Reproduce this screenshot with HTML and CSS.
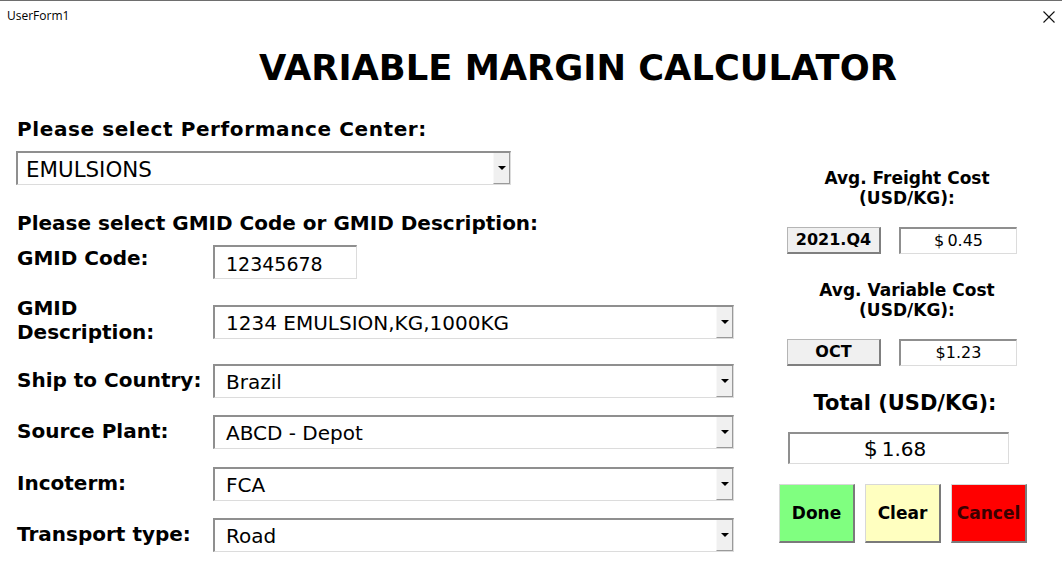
FILE: index.html
```html
<!DOCTYPE html>
<html>
<head>
<meta charset="utf-8">
<link rel="stylesheet" href="styles.css">
</head>
<body>
<div class="window">
  <div class="titlebar">
    <span class="caption">UserForm1</span>
    <svg class="close" width="12" height="12" viewBox="0 0 12 12"><path d="M0.5 0.5 L11.5 11.5 M11.5 0.5 L0.5 11.5" stroke="#111" stroke-width="1.1" fill="none"/></svg>
  </div>
  <h1 class="title">VARIABLE MARGIN CALCULATOR</h1>
  <div class="main">
    <div class="left">
      <div class="label head-label">Please select Performance Center:</div>
      <div class="combo combo-pc"><span class="value">EMULSIONS</span><span class="drop"><i></i></span></div>
      <div class="label sub-label">Please select GMID Code or GMID Description:</div>
      <div class="row row-code">
        <div class="label field-label">GMID Code:</div>
        <div class="textbox code-box">12345678</div>
      </div>
      <div class="row row-desc">
        <div class="label field-label two-line">GMID<br>Description:</div>
        <div class="combo"><span class="value">1234 EMULSION,KG,1000KG</span><span class="drop"><i></i></span></div>
      </div>
      <div class="row">
        <div class="label field-label">Ship to Country:</div>
        <div class="combo"><span class="value">Brazil</span><span class="drop"><i></i></span></div>
      </div>
      <div class="row row-tall">
        <div class="label field-label">Source Plant:</div>
        <div class="combo"><span class="value">ABCD - Depot</span><span class="drop"><i></i></span></div>
      </div>
      <div class="row">
        <div class="label field-label">Incoterm:</div>
        <div class="combo"><span class="value">FCA</span><span class="drop"><i></i></span></div>
      </div>
      <div class="row">
        <div class="label field-label">Transport type:</div>
        <div class="combo"><span class="value">Road</span><span class="drop"><i></i></span></div>
      </div>
    </div>
    <div class="right">
      <div class="cost-head freight-head">Avg. Freight Cost<br>(USD/KG):</div>
      <div class="pair">
        <div class="period">2021.Q4</div>
        <div class="money">$&#8201;0.45</div>
      </div>
      <div class="cost-head var-head">Avg. Variable Cost<br>(USD/KG):</div>
      <div class="pair">
        <div class="period">OCT</div>
        <div class="money">$1.23</div>
      </div>
      <div class="total-head">Total (USD/KG):</div>
      <div class="total-box"><span class="dollar">$</span>&#8201;1.68</div>
      <div class="buttons">
        <div class="btn btn-done">Done</div>
        <div class="btn btn-clear">Clear</div>
        <div class="btn btn-cancel">Cancel</div>
      </div>
    </div>
  </div>
</div>
</body>
</html>
```

FILE: styles.css
```css
* { box-sizing: border-box; }
html, body { margin: 0; padding: 0; background: #fff; }
body { font-family: "DejaVu Sans", Verdana, sans-serif; color: #000; }

.window {
  width: 1062px;
  height: 570px;
  border-top: 1px solid #6e6e6e;
  background: #fff;
  overflow: hidden;
}

.titlebar {
  height: 29px;
  display: flex;
  align-items: center;
  justify-content: space-between;
  padding: 0 7px 0 7px;
}
.caption {
  font-family: "Open Sans", "Noto Sans", sans-serif;
  font-size: 12px;
  color: #000;
}
.close { display: block; margin-top: 2px; }

.title {
  margin: 18px 0 0 259px;
  font-size: 35.3px;
  line-height: 40px;
  font-weight: bold;
  white-space: nowrap;
}

.main {
  display: flex;
  padding-left: 16px;
}

.left {
  width: 763px;
  display: flex;
  flex-direction: column;
}

.label {
  font-weight: bold;
  font-size: 20px;
  line-height: 22px;
  white-space: nowrap;
}
.head-label { margin: 30px 0 0 1px; letter-spacing: 0.6px; }
.sub-label { margin: 27px 0 0 1px; }

.combo {
  height: 34px;
  width: 521px;
  border-top: 2px solid #8f8f8f;
  border-left: 2px solid #8f8f8f;
  border-right: 1px solid #dcdcdc;
  border-bottom: 1px solid #dcdcdc;
  background: #fff;
  display: flex;
  align-items: center;
  font-size: 20px;
}
.combo-pc { width: 495px; margin-top: 11px; font-size: 21.4px; }
.combo .value { padding-left: 11px; padding-top: 1px; flex: 1; white-space: nowrap; }
.combo-pc .value { padding-left: 8px; }
.drop {
  width: 17px;
  align-self: stretch;
  background: #f0f0f0;
  border-left: 1px solid #f8f8f8;
  border-right: 1px solid #9a9a9a;
  border-bottom: 1px solid #9a9a9a;
  display: flex;
  align-items: center;
  justify-content: center;
}
.drop i {
  display: block;
  width: 0;
  height: 0;
  border-left: 4px solid transparent;
  border-right: 4px solid transparent;
  border-top: 4px solid #000;
}

.row {
  display: flex;
  align-items: flex-start;
  height: 51px;
}
.row-tall { height: 52px; }
.field-label { width: 197px; padding-top: 5px; padding-left: 1px; }
.row-code { margin-top: 11px; height: 60px; }
.row-code .field-label { padding-top: 2px; }
.row-desc { height: 59px; }
.two-line { padding-top: 0; line-height: 24px; margin-top: -9px; }

.textbox {
  height: 34px;
  border-top: 2px solid #8f8f8f;
  border-left: 2px solid #8f8f8f;
  border-right: 1px solid #dcdcdc;
  border-bottom: 1px solid #dcdcdc;
  background: #fff;
}
.code-box {
  width: 144px;
  font-size: 19px;
  padding: 6px 0 0 11px;
}

.right {
  width: 256px;
  display: flex;
  flex-direction: column;
  align-items: center;
  text-align: center;
}
.cost-head {
  font-weight: bold;
  font-size: 17px;
  line-height: 20px;
}
.freight-head { margin-top: 80px; }
.var-head { margin-top: 26px; }

.pair {
  display: flex;
  gap: 18px;
  margin-top: 19px;
  margin-left: -10px;
}
.period {
  width: 94px;
  height: 27px;
  background: #f0f0f0;
  border-top: 1px solid #b5b5b5;
  border-left: 1px solid #b5b5b5;
  border-right: 2px solid #7f7f7f;
  border-bottom: 2px solid #7f7f7f;
  font-weight: bold;
  font-size: 16px;
  line-height: 23px;
}
.money {
  width: 118px;
  height: 27px;
  border-top: 2px solid #8f8f8f;
  border-left: 2px solid #8f8f8f;
  border-right: 1px solid #dcdcdc;
  border-bottom: 1px solid #dcdcdc;
  font-size: 16px;
  line-height: 24px;
}

.total-head {
  margin-top: 25px;
  font-weight: bold;
  font-size: 21px;
  line-height: 24px;
  margin-left: -4px;
}
.total-box {
  margin-top: 17px;
  margin-left: -17px;
  width: 221px;
  height: 32px;
  border-top: 2px solid #8f8f8f;
  border-left: 2px solid #8f8f8f;
  border-right: 1px solid #dcdcdc;
  border-bottom: 1px solid #dcdcdc;
  font-size: 20px;
  line-height: 29px;
  padding-right: 8px;
}
.dollar { font-size: 22px; }

.buttons {
  display: flex;
  gap: 10px;
  margin-top: 20px;
  align-self: flex-start;
}
.btn {
  width: 76px;
  height: 59px;
  display: flex;
  align-items: center;
  justify-content: center;
  font-weight: bold;
  font-size: 17px;
  border-top: 1px solid #d8d8d8;
  border-left: 1px solid #d8d8d8;
  border-right: 2px solid #7a7a7a;
  border-bottom: 2px solid #7a7a7a;
}
.btn-done { background: #80ff80; }
.btn-clear { background: #ffffc0; }
.btn-cancel { background: #ff0000; color: #3a0000; }
```
